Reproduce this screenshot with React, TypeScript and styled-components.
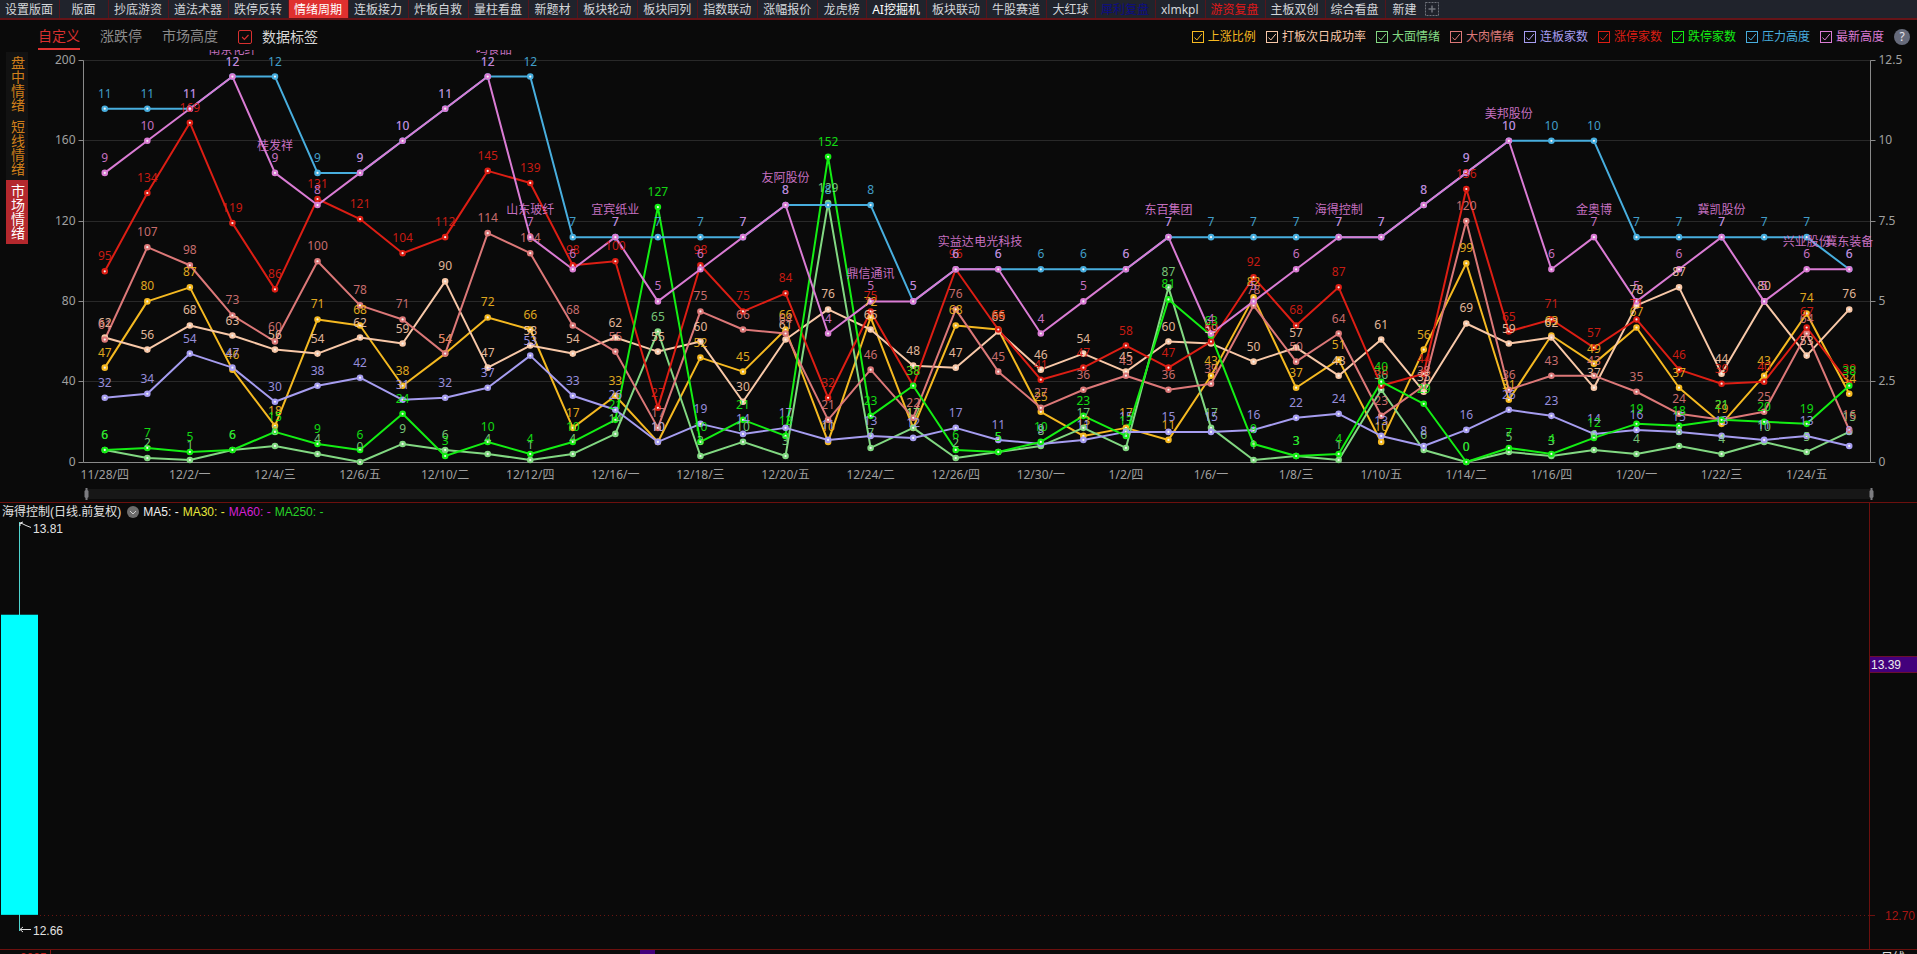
import React, { useLayoutEffect, useRef, useState } from 'react';
import styled, { createGlobalStyle, css } from 'styled-components';

const GlobalStyle = createGlobalStyle`
  * { box-sizing: border-box; }
  body {
    margin: 0;
    background: #0a0a0a;
    color: #e0e0e0;
    font: 12px/16px "Noto Sans", "Noto Sans CJK SC", sans-serif;
  }
  button { font: inherit; color: inherit; background: none; border: 0; padding: 0; margin: 0; cursor: pointer; }
  input { margin: 0; color: inherit; }
`;

const Page = styled.div`
  display: flex;
  flex-direction: column;
  height: 100vh;
  min-width: 1200px;
  overflow: hidden;
`;

/* ---------- top bar ---------- */

const TopBar = styled.nav`
  display: flex;
  flex: none;
  height: 20px;
  background: #20232c;
  border-bottom: 2px solid #651418;
  overflow: hidden;
`;

const TopTab = styled.button<{ $active?: boolean; $color?: string; $last?: boolean }>`
  flex: none;
  min-width: ${p => (p.$last ? 39 : 49)}px;
  padding: 0 6px 0 5px;
  line-height: 17px;
  white-space: nowrap;
  color: ${p => p.$color ?? '#d4d6da'};
  background: ${p => (p.$active ? '#e0302f' : 'transparent')};
  border-right: ${p => (p.$last ? 0 : 1)}px solid #55151b;
`;

const AddTab = styled.button`
  display: flex;
  align-items: center;
`;

/* ---------- emotion chart panel ---------- */

const ChartPanel = styled.section`
  display: flex;
  flex: none;
`;

const SideTabs = styled.div`
  display: flex;
  flex-direction: column;
  flex: none;
  width: 28px;
  padding: 32px 0 0 6px;
`;

const SideTab = styled.button<{ $active?: boolean }>`
  writing-mode: vertical-rl;
  width: 22px;
  height: 64px;
  font-size: 14px;
  line-height: 22px;
  text-align: center;
  color: ${p => (p.$active ? '#ffffff' : '#cf7f1a')};
  background: ${p => (p.$active ? '#b4282d' : '#121212')};
`;

const ChartMain = styled.div`
  flex: 1;
  min-width: 0;
`;

const Toolbar = styled.div`
  display: flex;
  align-items: center;
  height: 30px;
  padding: 4px 7px 0 10px;
`;

const ViewTab = styled.button<{ $active?: boolean }>`
  height: 26px;
  margin-right: 20px;
  font-size: 14px;
  line-height: 24px;
  color: ${p => (p.$active ? '#d8302f' : '#8c8c8c')};
  border-bottom: 2px solid ${p => (p.$active ? '#e0302f' : 'transparent')};
`;

const CheckLabel = styled.label<{ $color: string; $large?: boolean }>`
  display: flex;
  align-items: center;
  gap: 4px;
  color: ${p => p.$color};
  white-space: nowrap;
  ${p =>
    p.$large &&
    css`
      gap: 10px;
      font-size: 14px;
      span:last-child { color: #d6d6d6; }
    `}
`;

const CheckBox = styled.span<{ $large?: boolean }>`
  display: grid;
  width: ${p => (p.$large ? 14 : 12)}px;
  height: ${p => (p.$large ? 14 : 12)}px;
  > * { grid-area: 1 / 1; width: 100%; height: 100%; }
  input {
    appearance: none;
    border: 1px solid currentColor;
    border-radius: ${p => (p.$large ? 2 : 0)}px;
  }
  svg { display: none; pointer-events: none; }
  input:checked + svg { display: block; }
`;

const Legend = styled.div`
  display: flex;
  gap: 10px;
  margin-left: auto;
`;

const HelpButton = styled.button`
  width: 16px;
  height: 16px;
  margin-left: 10px;
  border-radius: 8px;
  background: #666a7a;
  color: #e6e6ee;
  font-size: 12px;
  line-height: 16px;
`;

const ChartSvg = styled.svg`
  display: block;
  width: 100%;
  height: 452px;
  overflow: hidden;
  text { font-size: 12px; }
`;

/* ---------- k-line panel ---------- */

const KPanel = styled.section`
  display: flex;
  flex: 1;
  min-height: 0;
  border-top: 1px solid #6c100e;
  border-bottom: 1px solid #6c100e;
  font-family: "Liberation Sans", "Noto Sans CJK SC", sans-serif;
`;

const KMain = styled.div`
  display: flex;
  flex-direction: column;
  flex: 1;
  min-width: 0;
`;

const KHeader = styled.div`
  display: flex;
  align-items: center;
  flex: none;
  gap: 4px;
  height: 18px;
  padding-left: 2px;
  white-space: nowrap;
`;

const KTitle = styled.span`
  color: #e2e2e2;
`;

const MenuButton = styled.button`
  display: flex;
  width: 12px;
  height: 12px;
  margin-left: 2px;
`;

const Ma = styled.span<{ $color: string }>`
  color: ${p => p.$color};
`;

const KPlot = styled.div`
  flex: 1;
  min-height: 0;
`;

const KAxis = styled.div`
  flex: none;
  width: 48px;
  border-left: 1px solid #6c100e;
`;

const FillSvg = styled.svg`
  display: block;
  width: 100%;
  height: 100%;
  overflow: hidden;
  text { font-size: 12px; }
`;

const Footer = styled.footer`
  position: relative;
  display: flex;
  justify-content: space-between;
  flex: none;
  height: 4px;
  overflow: hidden;
  padding: 0 12px 0 20px;
  font-family: "Liberation Sans", "Noto Sans CJK SC", sans-serif;
`;

const FooterDate = styled.span`
  height: 16px;
  padding-right: 3px;
  border-right: 1px solid #8c1512;
  color: #c01a16;
`;

const CursorMark = styled.span`
  position: absolute;
  left: 33.4%;
  width: 15px;
  height: 4px;
  background: #43007c;
`;

/* ---------- data ---------- */

const TOP_TABS: { name: string; active?: boolean; color?: string }[] = [
  { name: '设置版面' }, { name: '版面' }, { name: '抄底游资' }, { name: '道法术器' },
  { name: '跌停反转' }, { name: '情绪周期', active: true, color: '#ffffff' }, { name: '连板接力' },
  { name: '炸板自救' }, { name: '量柱看盘' }, { name: '新题材' }, { name: '板块轮动' },
  { name: '板块同列' }, { name: '指数联动' }, { name: '涨幅报价' }, { name: '龙虎榜' },
  { name: 'AI挖掘机', color: '#ffffff' }, { name: '板块联动' }, { name: '牛股赛道' }, { name: '大红球' },
  { name: '犀利复盘', color: '#0c0c84' }, { name: 'xlmkpl' }, { name: '游资复盘', color: '#e01818' },
  { name: '主板双创' }, { name: '综合看盘' },
];

interface Series { name: string; color: string; right?: boolean; data: number[] }

const SERIES: Series[] = [
  { name: '上涨比例', color: '#f5b921', data: [47, 80, 87, 46, 18, 71, 68, 38, 54, 72, 66, 17, 33, 10, 52, 45, 66, 10, 72, 17, 68, 66, 25, 13, 17, 11, 43, 82, 37, 51, 10, 56, 99, 31, 63, 49, 67, 37, 19, 43, 74, 34] },
  { name: '打板次日成功率', color: '#f8c8a8', data: [62, 56, 68, 63, 56, 54, 62, 59, 90, 47, 58, 54, 62, 55, 60, 30, 61, 76, 66, 48, 47, 65, 46, 54, 45, 60, 59, 50, 57, 43, 61, 35, 69, 59, 62, 37, 78, 87, 44, 80, 53, 76] },
  { name: '大面情绪', color: '#82d882', data: [6, 2, 1, 6, 8, 4, 0, 9, 6, 4, 1, 4, 14, 65, 3, 10, 3, 129, 7, 17, 2, 5, 8, 17, 7, 87, 17, 1, 3, 1, 36, 6, 0, 5, 3, 6, 4, 8, 4, 10, 5, 15] },
  { name: '大肉情绪', color: '#dc7878', data: [61, 107, 98, 73, 60, 100, 78, 71, 54, 114, 104, 68, 55, 17, 75, 66, 64, 21, 46, 22, 76, 45, 27, 36, 43, 36, 39, 78, 50, 64, 23, 38, 120, 36, 43, 43, 35, 24, 21, 25, 64, 16] },
  { name: '连板家数', color: '#a69df0', data: [32, 34, 54, 47, 30, 38, 42, 31, 32, 37, 53, 33, 26, 10, 19, 14, 17, 11, 13, 12, 17, 11, 9, 11, 15, 15, 15, 16, 22, 24, 13, 8, 16, 26, 23, 14, 16, 15, 13, 11, 13, 8] },
  { name: '涨停家数', color: '#dc1e14', data: [95, 134, 169, 119, 86, 131, 121, 104, 112, 145, 139, 98, 100, 27, 98, 75, 84, 32, 75, 38, 96, 66, 41, 47, 58, 47, 60, 92, 68, 87, 38, 44, 136, 65, 71, 57, 71, 46, 39, 40, 67, 39] },
  { name: '跌停家数', color: '#14ee14', data: [6, 7, 5, 6, 15, 9, 6, 24, 3, 10, 4, 10, 21, 127, 10, 21, 13, 152, 23, 38, 6, 5, 10, 23, 13, 81, 63, 9, 3, 4, 40, 29, 0, 7, 4, 12, 19, 18, 21, 20, 19, 38] },
  { name: '压力高度', color: '#48aede', right: true, data: [11, 11, 11, 12, 12, 9, 9, 10, 11, 12, 12, 7, 7, 7, 7, 7, 8, 8, 8, 5, 6, 6, 6, 6, 6, 7, 7, 7, 7, 7, 7, 8, 9, 10, 10, 10, 7, 7, 7, 7, 7, 6] },
  { name: '最新高度', color: '#da7cd4', right: true, data: [9, 10, 11, 12, 9, 8, 9, 10, 11, 12, 7, 6, 7, 5, 6, 7, 8, 4, 5, 5, 6, 6, 4, 5, 6, 7, 4, 5, 6, 7, 7, 8, 9, 10, 6, 7, 5, 6, 7, 5, 6, 6] },
];

const STOCKS: Record<number, string> = {
  3: '南京化纤', 4: '桂发祥', 9: '一鸣食品', 10: '山东玻纤', 12: '宜宾纸业', 16: '友阿股份',
  18: '鼎信通讯', 20: '实益达', 21: '电光科技', 25: '东百集团', 29: '海得控制', 33: '美邦股份',
  35: '金奥博', 38: '冀凯股份', 40: '兴业股份', 41: '冀东装备',
};

const DATES = [
  '11/28/四', '12/2/一', '12/4/三', '12/6/五', '12/10/二', '12/12/四', '12/16/一',
  '12/18/三', '12/20/五', '12/24/二', '12/26/四', '12/30/一', '1/2/四', '1/6/一',
  '1/8/三', '1/10/五', '1/14/二', '1/16/四', '1/20/一', '1/22/三', '1/24/五',
];

/* ---------- helpers ---------- */

function useSize<T extends Element>(w: number, h: number) {
  const ref = useRef<T>(null);
  const [size, setSize] = useState({ w, h });
  useLayoutEffect(() => {
    const el = ref.current;
    if (!el) return;
    const read = () => {
      const r = el.getBoundingClientRect();
      setSize({ w: r.width, h: r.height });
    };
    read();
    const ob = new ResizeObserver(read);
    ob.observe(el);
    return () => ob.disconnect();
  }, []);
  return [ref, size] as const;
}

function Check({ label, color, large }: { label: string; color: string; large?: boolean }) {
  return (
    <CheckLabel $color={color} $large={large}>
      <CheckBox $large={large}>
        <input type="checkbox" defaultChecked />
        <svg viewBox="0 0 12 12" fill="none" stroke="currentColor" strokeWidth="1">
          <path d={large ? 'M3.5 6 L5.5 8 L9 4.3' : 'M2.5 6.5 L4.8 9 L9.8 3'} />
        </svg>
      </CheckBox>
      <span>{label}</span>
    </CheckLabel>
  );
}

/* ---------- emotion chart ---------- */

function EmotionChart() {
  const [ref, { w }] = useSize<SVGSVGElement>(1889, 452);
  const left = 55.5;
  const right = w - 46.5;
  const top = 10.5;
  const bottom = 412;
  const count = DATES.length * 2;
  const step = (right - left) / count;
  const px = (i: number) => left + (i + 0.5) * step;
  const py = (v: number, onRight?: boolean) => bottom - (v / (onRight ? 12.5 : 200)) * (bottom - top);

  return (
    <ChartSvg ref={ref} role="img" aria-label="市场情绪">
      {[0, 1, 2, 3, 4, 5].map(k => {
        const y = Math.floor(py(k * 40)) + 0.5;
        return (
          <g key={k}>
            {k > 0 && <line x1={left} x2={right} y1={y} y2={y} stroke="#484848" strokeDasharray="1 1" />}
            <line x1={left - 5} x2={left} y1={y} y2={y} stroke="#8a8a8a" />
            <line x1={right} x2={right + 5} y1={y} y2={y} stroke="#8a8a8a" />
            <text x={left - 8} y={y + 3} textAnchor="end" fill="#a0a0a0">{k * 40}</text>
            <text x={right + 8} y={y + 3} fill="#a0a0a0">{k * 2.5}</text>
          </g>
        );
      })}
      <path
        d={`M${left} ${top}V${bottom + 0.5}H${right}V${top}`}
        fill="none"
        stroke="#8a8a8a"
      />
      {DATES.map((d, k) => (
        <text key={d} x={px(k * 2)} y={429} textAnchor="middle" fill="#a0a0a0">{d}</text>
      ))}

      {SERIES.map(s => (
        <polyline
          key={s.name}
          points={s.data.map((v, i) => `${px(i)},${py(v, s.right)}`).join(' ')}
          fill="none"
          stroke={s.color}
          strokeWidth="2"
          strokeLinejoin="bevel"
        />
      ))}
      {SERIES.map(s => (
        <g key={s.name} fill="#f4f4f4" stroke={s.color} strokeWidth="2.2">
          {s.data.map((v, i) => <circle key={i} cx={px(i)} cy={py(v, s.right)} r="2.2" />)}
        </g>
      ))}
      {SERIES.map(s => (
        <g key={s.name} fill={s.color} textAnchor="middle" opacity="0.9">
          {s.data.map((v, i) => <text key={i} x={px(i)} y={py(v, s.right) - 11}>{v}</text>)}
        </g>
      ))}
      <g fill="#da7cd4" textAnchor="middle" opacity="0.9">
        {Object.entries(STOCKS).map(([i, name]) => (
          <text key={i} x={px(+i)} y={py(SERIES[8].data[+i], true) - 23}>{name}</text>
        ))}
      </g>

      <rect x={left + 3} y="439" width={right - left - 3} height="10" fill="#171717" />
      {[left + 3, right + 1].map(x => (
        <path key={x} d={`M${x - 1} 438h2v2l1 1v6l-1 1v2h-2v-2l-1 -1v-6l1 -1z`} fill="#7c7c80" />
      ))}
    </ChartSvg>
  );
}

/* ---------- k-line ---------- */

const K_HEADER = 18;
const priceY = (p: number, h: number) => 1 + ((13.81 - p) / 1.15) * (h - 21);

function KPlotView() {
  const [ref, { w, h }] = useSize<SVGSVGElement>(1869, 428);
  const open = priceY(13.548, h);
  const close = priceY(12.7, h);
  const high = priceY(13.81, h);
  const low = priceY(12.66, h);
  const gridY = Math.round(close) + 0.5;
  return (
    <FillSvg ref={ref} role="img" aria-label="日线">
      <line x1="40" x2={w} y1={gridY} y2={gridY} stroke="#6a1512" strokeDasharray="1 3" />
      <line x1="19.5" x2="19.5" y1={high} y2={low + 2} stroke="#4fd4cf" />
      <rect x="1" y={open} width="37" height={close - open} fill="#00ffff" />
      <g fill="none" stroke="#e2e2e2">
        <path d={`M20 ${high + 1.5}h2l4 2l5 2M20 ${high + 4}v-3l3 -1`} />
        <path d={`M20 ${low + 0.5}h11M23 ${low - 2}l-3 2.5l3 2.5`} />
      </g>
      <text x="33" y={high + 11} fill="#e2e2e2">13.81</text>
      <text x="33" y={low + 6} fill="#e2e2e2">12.66</text>
    </FillSvg>
  );
}

function KAxisView() {
  const [ref, { w, h }] = useSize<SVGSVGElement>(47, 446);
  const y = (p: number) => Math.round(K_HEADER + priceY(p, h - K_HEADER));
  const cursor = y(13.405);
  return (
    <FillSvg ref={ref} role="img" aria-label="价格">
      <line x1="0" x2="5" y1={y(12.7) + 0.5} y2={y(12.7) + 0.5} stroke="#6c100e" />
      <text x={w - 2} y={y(12.7) + 5} textAnchor="end" fill="#a81613">12.70</text>
      <rect x="-1" y={cursor - 8.5} width={w + 2} height="16" fill="#43007c" stroke="#6c0f30" />
      <text x="1" y={cursor + 4} fill="#ececec">13.39</text>
    </FillSvg>
  );
}

export default function App() {
  return (
    <Page>
      <GlobalStyle />
      <TopBar>
        {TOP_TABS.map(t => (
          <TopTab key={t.name} $active={t.active} $color={t.color}>{t.name}</TopTab>
        ))}
        <TopTab $last>新建</TopTab>
        <AddTab aria-label="添加">
          <svg width="14" height="16" fill="none" stroke="#70747c">
            <rect x="0.5" y="1.5" width="13" height="13" strokeDasharray="2 1" />
            <path d="M7 4.500V11.500M3.500 8H10.500" strokeWidth="1.500" />
          </svg>
        </AddTab>
      </TopBar>

      <ChartPanel>
        <SideTabs>
          <SideTab>盘中情绪</SideTab>
          <SideTab>短线情绪</SideTab>
          <SideTab $active>市场情绪</SideTab>
        </SideTabs>
        <ChartMain>
          <Toolbar>
            <ViewTab $active>自定义</ViewTab>
            <ViewTab>涨跌停</ViewTab>
            <ViewTab>市场高度</ViewTab>
            <Check label="数据标签" color="#d8302f" large />
            <Legend>
              {SERIES.map(s => <Check key={s.name} label={s.name} color={s.color} />)}
            </Legend>
            <HelpButton aria-label="帮助">?</HelpButton>
          </Toolbar>
          <EmotionChart />
        </ChartMain>
      </ChartPanel>

      <KPanel>
        <KMain>
          <KHeader>
            <KTitle>海得控制(日线.前复权)</KTitle>
            <MenuButton aria-label="展开">
              <svg width="12" height="12" viewBox="0 0 12 12">
                <circle cx="6" cy="6" r="6" fill="#6c6c6c" />
                <path d="M3 5l3 3l3 -3" fill="none" stroke="#d0d0d0" />
              </svg>
            </MenuButton>
            <Ma $color="#f0f0f0">MA5: -</Ma>
            <Ma $color="#e8e83c">MA30: -</Ma>
            <Ma $color="#d420d4">MA60: -</Ma>
            <Ma $color="#28d428">MA250: -</Ma>
          </KHeader>
          <KPlot><KPlotView /></KPlot>
        </KMain>
        <KAxis><KAxisView /></KAxis>
      </KPanel>

      <Footer>
        <FooterDate>2025</FooterDate>
        <CursorMark />
        <span>日线</span>
      </Footer>
    </Page>
  );
}
